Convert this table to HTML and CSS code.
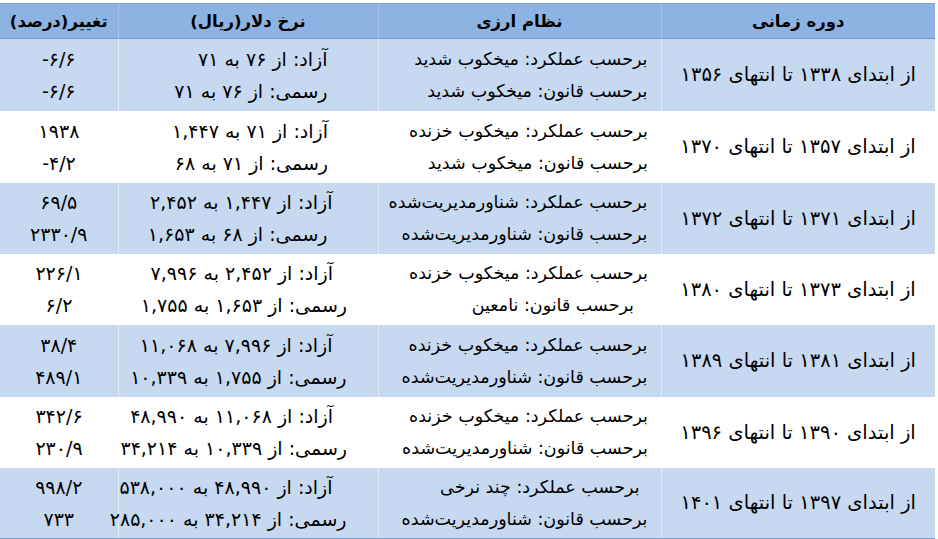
FILE: index.html
```html
<!DOCTYPE html>
<html lang="fa">
<head>
<meta charset="utf-8">
<link rel="stylesheet" href="styles.css">
</head>
<body>
<table class="fx" dir="rtl">
  <colgroup>
    <col class="c-period"><col class="c-regime"><col class="c-rate"><col class="c-change">
  </colgroup>
  <thead>
    <tr>
      <th>دوره زمانی</th>
      <th>نظام ارزی</th>
      <th>نرخ دلار(ریال)</th>
      <th>تغییر(درصد)</th>
    </tr>
  </thead>
  <tbody>
    <tr class="blue h72">
      <td class="period">از ابتدای ۱۳۳۸ تا انتهای ۱۳۵۶</td>
      <td class="regime"><span>برحسب عملکرد: میخکوب شدید</span><span>برحسب قانون: میخکوب شدید</span></td>
      <td class="rate"><span class="narrow">آزاد: از ۷۶ به ۷۱</span><span class="narrow">رسمی: از ۷۶ به ۷۱</span></td>
      <td class="change"><span>۶/۶-</span><span>۶/۶-</span></td>
    </tr>
    <tr class="white h72">
      <td class="period">از ابتدای ۱۳۵۷ تا انتهای ۱۳۷۰</td>
      <td class="regime"><span>برحسب عملکرد: میخکوب خزنده</span><span>برحسب قانون: میخکوب شدید</span></td>
      <td class="rate"><span class="narrow">آزاد: از ۷۱ به ۱,۴۴۷</span><span class="narrow">رسمی: از ۷۱ به ۶۸</span></td>
      <td class="change"><span>۱۹۳۸</span><span>۴/۲-</span></td>
    </tr>
    <tr class="blue h71">
      <td class="period">از ابتدای ۱۳۷۱ تا انتهای ۱۳۷۲</td>
      <td class="regime"><span>برحسب عملکرد: شناورمدیریت‌شده</span><span>برحسب قانون: شناورمدیریت‌شده</span></td>
      <td class="rate"><span>آزاد: از ۱,۴۴۷ به ۲,۴۵۲</span><span class="narrow">رسمی: از ۶۸ به ۱,۶۵۳</span></td>
      <td class="change"><span>۶۹/۵</span><span>۲۳۳۰/۹</span></td>
    </tr>
    <tr class="white h71">
      <td class="period">از ابتدای ۱۳۷۳ تا انتهای ۱۳۸۰</td>
      <td class="regime"><span>برحسب عملکرد: میخکوب خزنده</span><span class="indent-lg">برحسب قانون: نامعین</span></td>
      <td class="rate"><span>آزاد: از ۲,۴۵۲ به ۷,۹۹۶</span><span class="wide">رسمی: از ۱,۶۵۳ به ۱,۷۵۵</span></td>
      <td class="change"><span>۲۲۶/۱</span><span>۶/۲</span></td>
    </tr>
    <tr class="blue h72">
      <td class="period">از ابتدای ۱۳۸۱ تا انتهای ۱۳۸۹</td>
      <td class="regime"><span>برحسب عملکرد: میخکوب خزنده</span><span>برحسب قانون: شناورمدیریت‌شده</span></td>
      <td class="rate"><span>آزاد: از ۷,۹۹۶ به ۱۱,۰۶۸</span><span class="wide">رسمی: از ۱,۷۵۵ به ۱۰,۳۳۹</span></td>
      <td class="change"><span>۳۸/۴</span><span>۴۸۹/۱</span></td>
    </tr>
    <tr class="white h71">
      <td class="period">از ابتدای ۱۳۹۰ تا انتهای ۱۳۹۶</td>
      <td class="regime"><span>برحسب عملکرد: میخکوب خزنده</span><span>برحسب قانون: شناورمدیریت‌شده</span></td>
      <td class="rate"><span>آزاد: از ۱۱,۰۶۸ به ۴۸,۹۹۰</span><span class="wide">رسمی: از ۱۰,۳۳۹ به ۳۴,۲۱۴</span></td>
      <td class="change"><span>۳۴۲/۶</span><span>۲۳۰/۹</span></td>
    </tr>
    <tr class="blue h71 last">
      <td class="period">از ابتدای ۱۳۹۷ تا انتهای ۱۴۰۱</td>
      <td class="regime"><span class="indent">برحسب عملکرد: چند نرخی</span><span>برحسب قانون: شناورمدیریت‌شده</span></td>
      <td class="rate"><span>آزاد: از ۴۸,۹۹۰ به ۵۳۸,۰۰۰</span><span class="wide">رسمی: از ۳۴,۲۱۴ به ۲۸۵,۰۰۰</span></td>
      <td class="change"><span>۹۹۸/۲</span><span>۷۳۳</span></td>
    </tr>
  </tbody>
</table>
</body>
</html>
```
FILE: styles.css
```css
html, body {
  margin: 0;
  padding: 0;
  background: #ffffff;
}
body {
  padding-top: 3px;
  font-family: "DejaVu Sans", "Noto Sans", sans-serif;
  color: #000000;
}
.fx {
  width: 935px;
  border-collapse: collapse;
  table-layout: fixed;
  font-size: 18px;
}
.c-period { width: 274px; }
.c-regime { width: 283px; }
.c-rate { width: 260px; }
.c-change { width: 118px; }

.fx thead tr {
  background: #8db3e2;
  height: 35px;
  border-top: 1px solid #7a9fd3;
  border-bottom: 1px solid #6f95cc;
}
.fx th {
  font-weight: bold;
  text-align: center;
  padding: 0;
  border-left: 1px solid #a6c2ea;
  font-size: 16.5px;
}
.fx th:last-child { border-left: none; }

.fx td {
  padding: 0;
  vertical-align: middle;
}
.fx tr.blue { background: #c6d9f1; }
.fx tr.white { background: #ffffff; }
.fx tr.blue td { border-left: 1px solid #e3ecf8; }
.fx tr.blue td:last-child { border-left: none; }
.fx tr.h72 { height: 72px; }
.fx tr.h71 { height: 71px; }
.fx tr.last { border-bottom: 2px solid #7a9fd3; }

.fx td span {
  display: block;
  line-height: 32px;
  white-space: nowrap;
}
.period {
  text-align: center;
  font-size: 19.5px;
}
.regime {
  text-align: right;
  font-size: 17.5px;
}
.regime span { padding-right: 13px; }
.regime span.indent { padding-right: 21px; }
.regime span.indent-lg { padding-right: 27px; }
.rate {
  text-align: right;
  font-size: 19px;
}
.rate span { padding-right: 45px; }
.rate span.narrow { padding-right: 50px; }
.rate span.wide { padding-right: 31px; }
.change {
  text-align: center;
  font-size: 19px;
}
```
